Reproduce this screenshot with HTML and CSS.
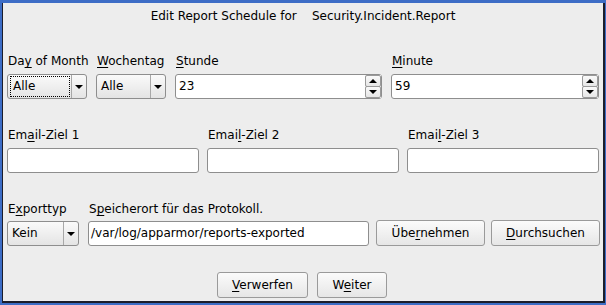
FILE: index.html
```html
<!DOCTYPE html>
<html lang="de">

<head>
    <meta charset="UTF-8">
    <title>Edit Report Schedule</title>
    <link rel="stylesheet" href="styles.css">
</head>

<body>
    <div class="window">
        <div class="frame">
            <div class="title">Edit Report Schedule for    Security.Incident.Report</div>

            <div class="row row-time">
                <label class="lbl">Da<u>y</u> of Month</label>
                <label class="lbl"><u>W</u>ochentag</label>
                <label class="lbl"><u>S</u>tunde</label>
                <label class="lbl"><u>M</u>inute</label>

                <div class="combo">
                    <span class="combo-text focus">Alle</span>
                    <span class="combo-btn"><i class="arrow-down"></i></span>
                </div>
                <div class="combo">
                    <span class="combo-text">Alle</span>
                    <span class="combo-btn"><i class="arrow-down"></i></span>
                </div>
                <div class="spin">
                    <span class="spin-text">23</span>
                    <span class="spin-btns">
                        <span class="spin-btn"><i class="arrow-up"></i></span>
                        <span class="spin-btn"><i class="arrow-down"></i></span>
                    </span>
                </div>
                <div class="spin">
                    <span class="spin-text">59</span>
                    <span class="spin-btns">
                        <span class="spin-btn"><i class="arrow-up"></i></span>
                        <span class="spin-btn"><i class="arrow-down"></i></span>
                    </span>
                </div>
            </div>

            <div class="row row-mail">
                <label class="lbl">Em<u>a</u>il-Ziel 1</label>
                <label class="lbl">Emai<u>l</u>-Ziel 2</label>
                <label class="lbl">Emai<u>l</u>-Ziel 3</label>
                <div class="input"></div>
                <div class="input"></div>
                <div class="input"></div>
            </div>

            <div class="row row-export">
                <label class="lbl">E<u>x</u>porttyp</label>
                <label class="lbl">S<u>p</u>eicherort für das Protokoll.</label>
                <span></span>
                <span></span>
                <div class="combo">
                    <span class="combo-text">Kein</span>
                    <span class="combo-btn"><i class="arrow-down"></i></span>
                </div>
                <div class="input path">/var/log/apparmor/reports-exported</div>
                <button class="btn">Übe<u>r</u>nehmen</button>
                <button class="btn"><u>D</u>urchsuchen</button>
            </div>

            <div class="actions">
                <button class="btn btn-verwerfen"><u>V</u>erwerfen</button>
                <button class="btn btn-weiter">W<u>e</u>iter</button>
            </div>
        </div>
    </div>
</body>

</html>
```

FILE: styles.css
```css
* {
    margin: 0;
    padding: 0;
    box-sizing: border-box;
}

body {
    width: 606px;
    height: 305px;
    font-family: "DejaVu Sans", sans-serif;
    font-size: 12px;
    line-height: 16px;
    color: #000;
    overflow: hidden;
}

u {
    text-decoration: underline;
    text-underline-offset: 2px;
}

/* window border: blue outside, dark line inside */
.window {
    width: 606px;
    height: 305px;
    border-top: 3px solid #3d6dc6;
    border-left: 2px solid #3d6dc6;
    border-right: 1px solid #3d6dc6;
    border-bottom: 2px solid #3d6dc6;
}

.frame {
    height: 100%;
    background-color: #ededed;
    border-left: 1px solid #1b1d2b;
    border-right: 2px solid #1b1d2b;
    border-bottom: 2px solid #1b1d2b;
    padding: 5px 4px 0 4px;
}

.title {
    text-align: center;
    white-space: pre;
    height: 16px;
}

.row {
    display: grid;
    grid-template-rows: 16px auto;
}

.lbl {
    padding-left: 1px;
    white-space: nowrap;
}

.row-time {
    margin-top: 29px;
    grid-template-columns: 80px 70px 207px 208px;
    column-gap: 9px;
    row-gap: 5px;
}

.row-mail {
    margin-top: 28px;
    grid-template-columns: 192px 192px 192px;
    column-gap: 8px;
    row-gap: 5px;
}

.row-export {
    margin-top: 28px;
    grid-template-columns: 72px 281px 109px 109px;
    column-gap: 9px;
    row-gap: 4px;
}

.row-export .btn {
    width: 109px;
    justify-self: start;
}

.row-export .btn:nth-of-type(1) {
    margin-left: -2px;
}

.row-export .btn:nth-of-type(2) {
    margin-left: -5px;
}

/* combo box */
.combo {
    height: 25px;
    display: flex;
    border: 1px solid #8e8e8e;
    border-radius: 3px;
    background: linear-gradient(#fafafa, #e4e4e4);
}

.combo-text {
    flex: 1;
    padding-left: 4px;
    line-height: 23px;
}

.combo-text.focus {
    margin: 1px 1px 1px 2px;
    padding-left: 2px;
    line-height: 19px;
    border: 1px dotted #000;
}

.combo-btn {
    width: 15px;
    border-left: 1px solid #a8a8a8;
    display: flex;
    align-items: center;
    justify-content: center;
}

.arrow-down {
    width: 0;
    height: 0;
    border-left: 4px solid transparent;
    border-right: 4px solid transparent;
    border-top: 4px solid #000;
}

.arrow-up {
    width: 0;
    height: 0;
    border-left: 4px solid transparent;
    border-right: 4px solid transparent;
    border-bottom: 4px solid #000;
}

/* spin box */
.spin {
    height: 25px;
    display: flex;
    border: 1px solid #8e8e8e;
    border-radius: 3px;
    background-color: #fff;
}

.spin-text {
    flex: 1;
    padding-left: 3px;
    line-height: 23px;
}

.spin-btns {
    width: 16px;
    display: flex;
    flex-direction: column;
    background-color: #ededed;
}

.spin-btn {
    flex: 1;
    display: flex;
    align-items: center;
    justify-content: center;
    border: 1px solid #9a9a9a;
    border-radius: 2px;
    background: linear-gradient(#fafafa, #e6e6e6);
}

.spin-btn + .spin-btn {
    margin-top: -1px;
}

/* text input */
.input {
    height: 25px;
    border: 1px solid #8e8e8e;
    border-radius: 3px;
    background-color: #fff;
}

.input.path {
    padding-left: 2px;
    line-height: 23px;
    white-space: nowrap;
    overflow: hidden;
}

/* buttons */
.btn {
    height: 26px;
    font-family: "DejaVu Sans", sans-serif;
    font-size: 12px;
    color: #000;
    border: 1px solid #9a9a9a;
    border-radius: 3px;
    background: linear-gradient(#fbfbfb, #e6e6e6);
    margin-top: -1px;
}

.actions {
    display: flex;
    justify-content: center;
    gap: 9px;
    margin-top: 27px;
    padding-right: 2px;
}

.btn-verwerfen {
    width: 91px;
}

.btn-weiter {
    width: 70px;
}
```
